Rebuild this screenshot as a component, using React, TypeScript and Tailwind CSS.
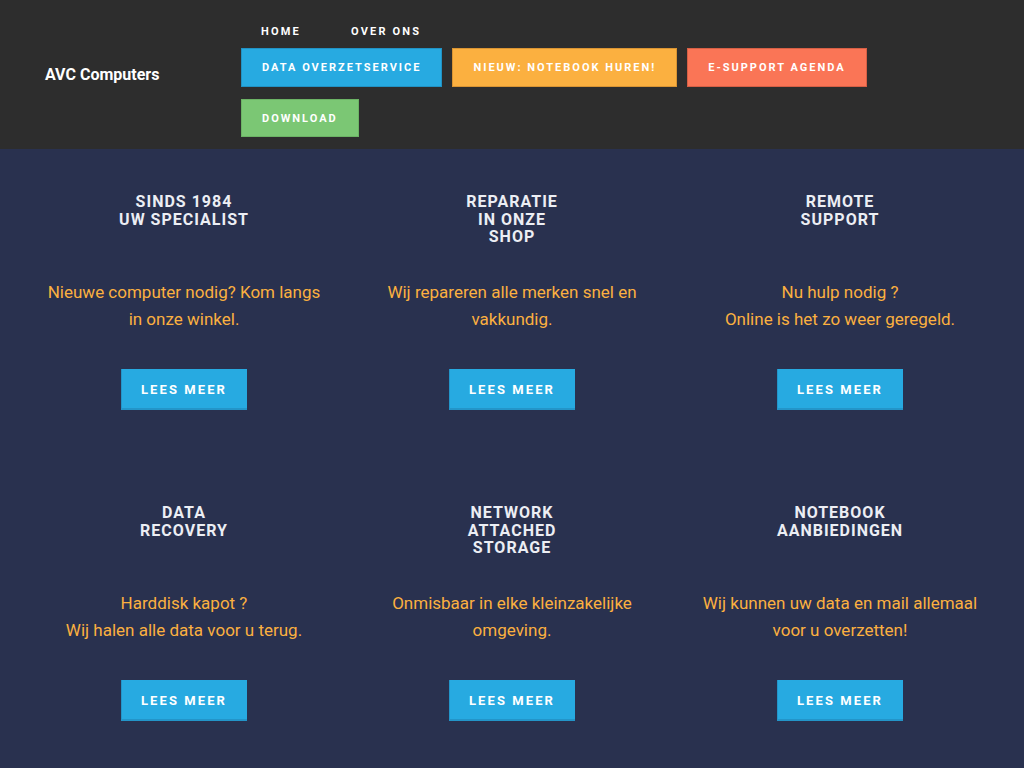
const navButtons = [
  { label: "Data overzetservice", cls: "bg-[#27aae1] border-[#2192c4]" },
  { label: "Nieuw: notebook huren!", cls: "bg-[#fbb040] border-[#d99433]" },
  { label: "E-support agenda", cls: "bg-[#fa7556] border-[#d65f45]" },
];

const services = [
  { title: ["Sinds 1984", "uw specialist"], text: ["Nieuwe computer nodig? Kom langs in onze winkel."] },
  { title: ["Reparatie", "in onze", "shop"], text: ["Wij repareren alle merken snel en vakkundig."] },
  { title: ["Remote", "support"], text: ["Nu hulp nodig ?", "Online is het zo weer geregeld."] },
  { title: ["Data", "recovery"], text: ["Harddisk kapot ?", "Wij halen alle data voor u terug."] },
  { title: ["Network", "attached", "storage"], text: ["Onmisbaar in elke kleinzakelijke omgeving."] },
  { title: ["Notebook", "aanbiedingen"], text: ["Wij kunnen uw data en mail allemaal voor u overzetten!"] },
];

function NavButton({ label, cls }: { label: string; cls: string }) {
  return (
    <a
      className={`flex h-[39px] items-center border px-5 text-[11px] font-bold uppercase leading-none tracking-[2px] text-white ${cls}`}
    >
      {label}
    </a>
  );
}

function ServiceCard({ title, text }: { title: string[]; text: string[] }) {
  return (
    <div className="flex flex-col items-center px-6 text-center">
      <h2 className="flex h-[53px] flex-col text-[16px] font-bold uppercase leading-[17.5px] tracking-[1px] text-[#eceef4]">
        {title.map((t) => (
          <span key={t}>{t}</span>
        ))}
      </h2>
      <p className="mt-[33px] h-[54px] text-[17px] leading-[27px] text-[#fbb040]">
        {text.map((t, i) => (
          <span key={t}>
            {i > 0 && <br />}
            {t}
          </span>
        ))}
      </p>
      <a className="mt-[36px] flex h-[41px] items-center bg-[#27aae1] px-5 text-[13px] font-bold uppercase tracking-[2.1px] text-white shadow-[inset_1px_-2px_0_#2395c9]">
        Lees meer
      </a>
    </div>
  );
}

export default function App() {
  return (
    <div className="min-h-screen bg-[#29314f] font-['Roboto',sans-serif]">
      <header className="flex h-[149px] items-center bg-[#2d2d2d]">
        <div className="w-[241px] pl-[45px] text-[16px] font-bold text-white">AVC Computers</div>
        <nav className="flex flex-col self-start pt-[22px]">
          <div className="flex h-[18px] gap-[10px] pt-px text-[11px] font-bold uppercase leading-[18px] tracking-[2.2px] text-white">
            <a className="px-5">Home</a>
            <a className="px-5">Over ons</a>
          </div>
          <div className="mt-[8px] flex gap-[10px]">
            {navButtons.map((b) => (
              <NavButton key={b.label} {...b} />
            ))}
          </div>
          <div className="mt-[12px] flex">
            <a className="flex h-[38px] items-center border border-[#6cb365] bg-[#7bc774] px-5 text-[11px] font-bold uppercase leading-none tracking-[2px] text-white">
              Download
            </a>
          </div>
        </nav>
      </header>
      <main className="grid grid-cols-3 gap-y-[94px] px-5 pt-[44px] pb-10">
        {services.map((s) => (
          <ServiceCard key={s.title.join()} {...s} />
        ))}
      </main>
    </div>
  );
}
